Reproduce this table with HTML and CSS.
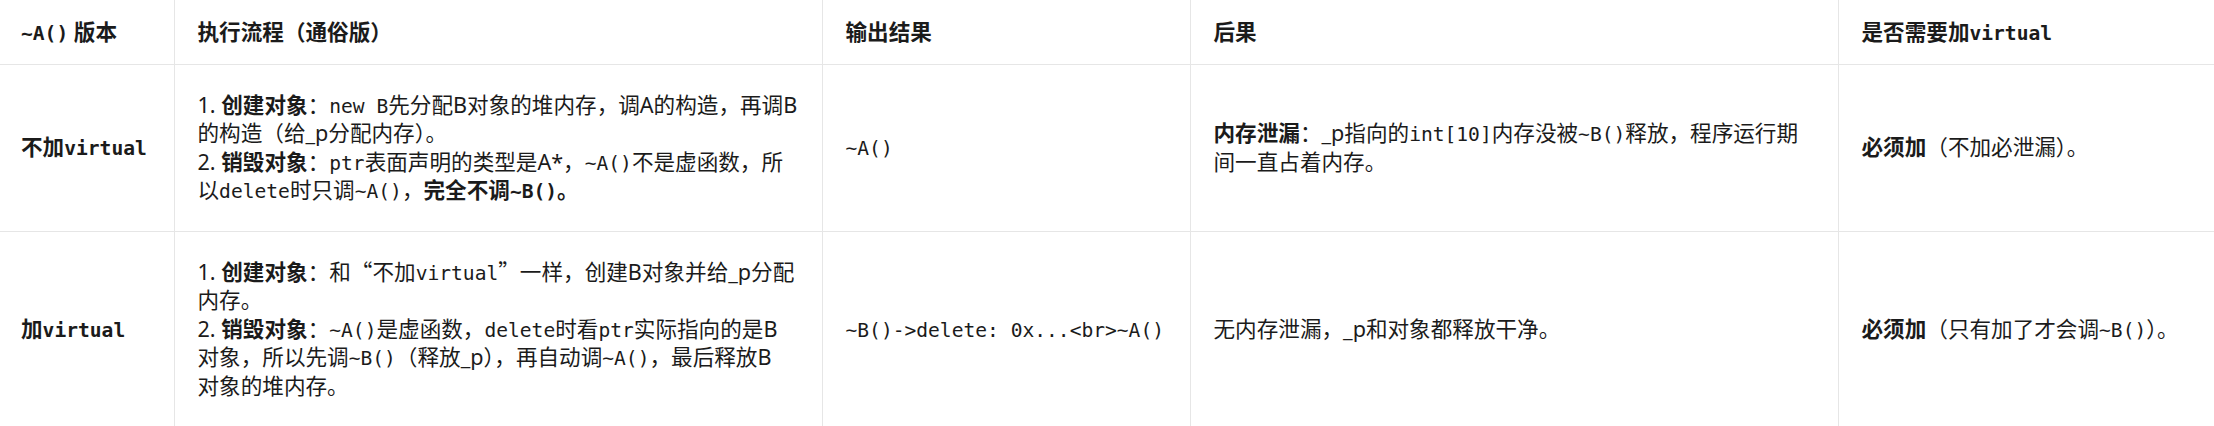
FILE: index.html
```html
<!DOCTYPE html>
<html lang="zh-CN">
<head>
<meta charset="utf-8">
<title>~A() 版本对比</title>
<link rel="stylesheet" href="styles.css">
</head>
<body>
<table class="cmp">
  <colgroup>
    <col class="c1"><col class="c2"><col class="c3"><col class="c4"><col class="c5">
  </colgroup>
  <thead>
    <tr>
      <th><code>~A()</code> 版本</th>
      <th>执行流程（通俗版）</th>
      <th>输出结果</th>
      <th>后果</th>
      <th>是否需要加<code>virtual</code></th>
    </tr>
  </thead>
  <tbody>
    <tr>
      <td><b>不加</b><code class="b">virtual</code></td>
      <td>1. <b>创建对象</b>：<code>new B</code>先分配B对象的堆内存，调A的构造，再调B<br>的构造（给_p分配内存）。<br>2. <b>销毁对象</b>：<code>ptr</code>表面声明的类型是A*，<code>~A()</code>不是虚函数，所<br>以<code>delete</code>时只调<code>~A()</code>，<b>完全不调<code>~B()</code>。</b></td>
      <td><code>~A()</code></td>
      <td><b>内存泄漏</b>：_p指向的<code>int[10]</code>内存没被<code>~B()</code>释放，程序运行期<br>间一直占着内存。</td>
      <td><b>必须加</b>（不加必泄漏）。</td>
    </tr>
    <tr>
      <td><b>加</b><code class="b">virtual</code></td>
      <td>1. <b>创建对象</b>：和<span class="q">“</span>不加<code>virtual</code><span class="q">”</span>一样，创建B对象并给_p分配<br>内存。<br>2. <b>销毁对象</b>：<code>~A()</code>是虚函数，<code>delete</code>时看<code>ptr</code>实际指向的是B<br>对象，所以先调<code>~B()</code>（释放_p），再自动调<code>~A()</code>，最后释放B<br>对象的堆内存。</td>
      <td><code>~B()-&gt;delete: 0x...&lt;br&gt;~A()</code></td>
      <td>无内存泄漏，_p和对象都释放干净。</td>
      <td><b>必须加</b>（只有加了才会调<code>~B()</code>）。</td>
    </tr>
  </tbody>
</table>
</body>
</html>
```
FILE: styles.css
```css
html, body {
  margin: 0;
  padding: 0;
  background: #ffffff;
}
body {
  font-family: "Noto Sans", "Noto Sans CJK SC", sans-serif;
  font-size: 21.6px;
  line-height: 28.5px;
  color: #1b1b1b;
}
.cmp {
  width: 2214px;
  border-collapse: collapse;
  table-layout: fixed;
}
.c1 { width: 174px; }
.c2 { width: 648px; }
.c3 { width: 368px; }
.c4 { width: 648px; }
.c5 { width: 376px; }

.cmp th, .cmp td {
  text-align: left;
  vertical-align: middle;
  border-left: 1px solid #e6e6e6;
  border-bottom: 1px solid #e6e6e6;
  white-space: nowrap;
}
.cmp th:first-child, .cmp td:first-child {
  border-left: none;
  padding-left: 21px;
}
.cmp th {
  font-weight: 700;
  padding: 18px 23px 17px 23px;
}
.cmp td {
  padding: 26px 23px;
}
.cmp tbody tr:last-child td {
  border-bottom: none;
}
code {
  font-family: "DejaVu Sans Mono", "Noto Sans CJK SC", monospace;
  font-size: 19.6px;
  line-height: 1;
}
code.b, th code, b code {
  font-weight: 700;
}
b {
  font-weight: 700;
}
.q {
  font-family: "Noto Sans CJK SC", sans-serif;
  line-height: 1;
}
```
